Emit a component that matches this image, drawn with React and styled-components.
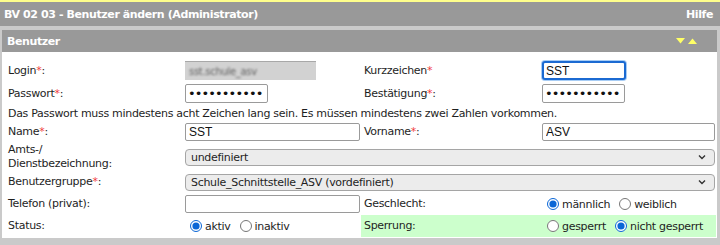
import React from 'react';
import styled, { createGlobalStyle } from 'styled-components';

const Global = createGlobalStyle`
  html, body { margin: 0; padding: 0; background: #cacaca; }
  body { font-family: "DejaVu Sans", Verdana, sans-serif; font-size: 11px; letter-spacing: -0.3px; color: #1e1e1e; }
  * { box-sizing: border-box; }
`;

const Page = styled.div`
  width: 720px;
  height: 245px;
  overflow: hidden;
  background: #cacaca;
  border-top: 2px solid #ffff8c;
`;

const TitleBar = styled.header`
  height: 24px;
  background: #999999;
  color: #ffffff;
  font-weight: bold;
  letter-spacing: -0.4px;
  display: flex;
  align-items: center;
  justify-content: space-between;
  padding: 0 7px 0 4px;
`;

const Content = styled.div`
  padding: 4px 3px 0 2px;
`;

const PanelHeader = styled.div`
  height: 22px;
  background: #999999;
  color: #ffffff;
  font-weight: bold;
  letter-spacing: -0.4px;
  display: flex;
  align-items: center;
  justify-content: space-between;
  padding: 0 20px 0 5px;
`;

const Toggles = styled.div`
  display: flex;
  gap: 3px;
  align-items: center;
`;

const PanelBody = styled.div`
  background: #ffffff;
  height: 186px;
  padding: 7px 1px 0 3px;
`;

const FormGrid = styled.div`
  display: grid;
  grid-template-columns: 178px 178px 179px 1fr;
  grid-template-rows: 23px 23px 16px 22px 28px 22px 22px 22px;
`;

const Label = styled.div`
  display: flex;
  align-items: center;
  padding: 0 2px 0 3px;
  line-height: 14px;
  white-space: nowrap;
  background: ${p => (p.$hl ? '#ccffcc' : 'transparent')};
`;

const Star = styled.span`
  color: #f03c3c;
`;

const Field = styled.div`
  display: flex;
  align-items: center;
  padding: 0 1px 0 2px;
  grid-column: ${p => p.$span || 'auto'};
  background: ${p => (p.$hl ? '#ccffcc' : 'transparent')};
`;

const Note = styled.div`
  grid-column: 1 / 5;
  display: flex;
  align-items: center;
  padding-left: 3px;
`;

const TextInput = styled.input`
  font-family: "Liberation Sans", Arial, sans-serif;
  font-size: 12px;
  letter-spacing: 0;
  color: #111;
  height: ${p => (p.$h || 19)}px;
  width: ${p => p.$w || '100%'};
  border: ${p => (p.$focused ? '2px solid #1b6ad2' : '1px solid #9a9a9a')};
  border-radius: ${p => (p.$focused ? 3 : 2)}px;
  box-shadow: ${p => (p.$focused ? '0 0 0 1px #a8cdf5' : 'none')};
  padding: 0 ${p => (p.$focused ? 2 : 3)}px;
  margin: 0;
  background: #fff;
  outline: none;
`;

const PasswordInput = styled(TextInput)`
  font-family: "DejaVu Sans", Verdana, sans-serif;
  font-size: 13px;
  letter-spacing: -0.9px;
  padding: 0 2px;
`;

const ReadonlyBox = styled.div`
  width: 131px;
  height: 19px;
  background: #d2d2d2;
  border-top: 1px solid #a8a8a8;
  display: flex;
  align-items: center;
  padding-left: 4px;
  overflow: hidden;
`;

const Blurred = styled.span`
  filter: blur(1.2px);
  color: #5e5e5e;
  font-size: 10px;
`;

const SelectBox = styled.div`
  width: 100%;
  height: 17px;
  border: 1px solid #a5a5a5;
  border-radius: 4px;
  background: #ececec;
  display: flex;
  align-items: center;
  justify-content: space-between;
  padding: 0 8px 0 5px;
`;

const RadioGroup = styled.div`
  display: flex;
  align-items: center;
  white-space: nowrap;
`;

const RadioLabel = styled.label`
  display: flex;
  align-items: center;
  margin-right: 4px;
`;

const Radio = styled.input`
  width: 12px;
  height: 12px;
  margin: 0 3px 0 5px;
  accent-color: #0a66d6;
`;

const Req = ({ children, colon = true }) => (
  <span>
    {children}
    <Star>*</Star>
    {colon ? ':' : ''}
  </span>
);

const Chevron = () => (
  <svg width="8" height="6" viewBox="0 0 8 6">
    <path d="M1 1.5 L4 4.5 L7 1.5" fill="none" stroke="#333" strokeWidth="1.4" />
  </svg>
);

const Tri = ({ up }) => (
  <svg width="9" height="6" viewBox="0 0 9 6">
    <path d={up ? 'M0 6 L4.5 0.5 L9 6 Z' : 'M0 0 L9 0 L4.5 5.5 Z'} fill="#ffff66" />
  </svg>
);

const RadioOpt = ({ name, checked, children }) => (
  <RadioLabel>
    <Radio type="radio" name={name} defaultChecked={checked} />
    {children}
  </RadioLabel>
);

export default function App() {
  return (
    <Page>
      <Global />
      <TitleBar>
        <span>BV 02 03 - Benutzer ändern (Administrator)</span>
        <span>Hilfe</span>
      </TitleBar>
      <Content>
        <PanelHeader>
          <span>Benutzer</span>
          <Toggles>
            <Tri />
            <Tri up />
          </Toggles>
        </PanelHeader>
        <PanelBody>
          <FormGrid>
            <Label><Req>Login</Req></Label>
            <Field>
              <ReadonlyBox><Blurred>sst.schule_asv</Blurred></ReadonlyBox>
            </Field>
            <Label><Req colon={false}>Kurzzeichen</Req></Label>
            <Field>
              <TextInput $w="84px" $h={19} $focused defaultValue="SST" />
            </Field>

            <Label><Req>Passwort</Req></Label>
            <Field>
              <PasswordInput type="password" $w="83px" defaultValue="xxxxxxxxxxx" />
            </Field>
            <Label><Req>Bestätigung</Req></Label>
            <Field>
              <PasswordInput type="password" $w="83px" defaultValue="xxxxxxxxxxx" />
            </Field>

            <Note>Das Passwort muss mindestens acht Zeichen lang sein. Es müssen mindestens zwei Zahlen vorkommen.</Note>

            <Label><Req>Name</Req></Label>
            <Field>
              <TextInput $h={18} defaultValue="SST" />
            </Field>
            <Label><Req>Vorname</Req></Label>
            <Field>
              <TextInput $h={18} defaultValue="ASV" />
            </Field>

            <Label>Amts-/<br />Dienstbezeichnung:</Label>
            <Field $span="2 / 5">
              <SelectBox><span>undefiniert</span><Chevron /></SelectBox>
            </Field>

            <Label><Req>Benutzergruppe</Req></Label>
            <Field $span="2 / 5">
              <SelectBox><span>Schule_Schnittstelle_ASV (vordefiniert)</span><Chevron /></SelectBox>
            </Field>

            <Label>Telefon (privat):</Label>
            <Field>
              <TextInput $h={18} defaultValue="" />
            </Field>
            <Label>Geschlecht:</Label>
            <Field>
              <RadioGroup>
                <RadioOpt name="g" checked>männlich</RadioOpt>
                <RadioOpt name="g">weiblich</RadioOpt>
              </RadioGroup>
            </Field>

            <Label>Status:</Label>
            <Field>
              <RadioGroup>
                <RadioOpt name="s" checked>aktiv</RadioOpt>
                <RadioOpt name="s">inaktiv</RadioOpt>
              </RadioGroup>
            </Field>
            <Label $hl>Sperrung:</Label>
            <Field $hl>
              <RadioGroup>
                <RadioOpt name="p">gesperrt</RadioOpt>
                <RadioOpt name="p" checked>nicht gesperrt</RadioOpt>
              </RadioGroup>
            </Field>
          </FormGrid>
        </PanelBody>
      </Content>
    </Page>
  );
}
